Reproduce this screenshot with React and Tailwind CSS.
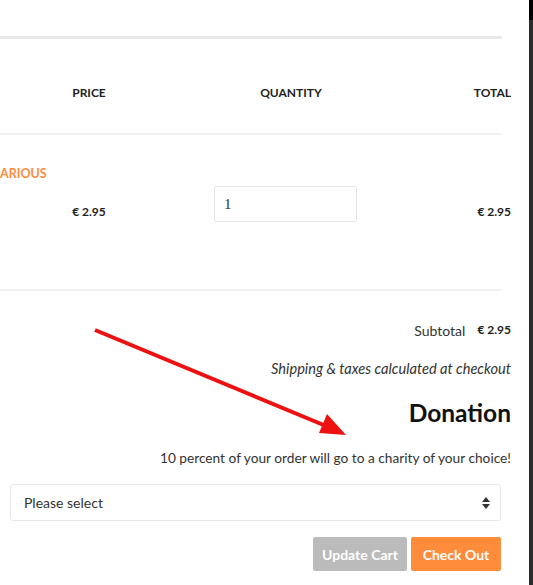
export default function App() {
  return (
    <div className="flex h-[585px] w-[533px] overflow-hidden bg-white font-['Lato',sans-serif] text-[#333]">
      <div className="relative w-[529px]">
        <div className="h-[36px]" />
        <div className="h-[3px] w-[502px] bg-[#e9e9e9]" />

        <div className="flex h-[94px] w-[511px] items-start pt-[46px] text-[12px] font-bold uppercase leading-[16px] text-[#222]">
          <div className="w-[44px]" />
          <div className="w-[90px] text-center">Price</div>
          <div className="w-[314px] text-center">Quantity</div>
          <div className="flex-1 text-right">Total</div>
        </div>
        <div className="h-[2px] w-[502px] bg-[#f1f1f1]" />

        <div className="flex h-[154px] w-[511px] items-start">
          <div className="w-[44px] pt-[31px]">
            <div className="whitespace-nowrap text-[12.5px] font-bold leading-[16px] text-[#ff8c3f]">ARIOUS</div>
          </div>
          <div className="w-[90px] pt-[70px] text-center text-[12px] font-bold leading-[14px] text-[#222]">€ 2.95</div>
          <div className="w-[314px] pt-[51px]">
            <input
              defaultValue="1"
              className="ml-[80px] h-[36px] w-[143px] rounded-[2px] border border-[#e6e6e6] px-[9px] font-['Liberation_Serif',serif] text-[15px] text-[#333] outline-none"
            />
          </div>
          <div className="flex-1 pt-[70px] text-right text-[12px] font-bold leading-[14px] text-[#222]">€ 2.95</div>
        </div>
        <div className="h-[2px] w-[502px] bg-[#f1f1f1]" />

        <div className="flex w-[511px] flex-col items-end">
          <div className="mt-[29px] flex h-[20px] items-center gap-[12px] text-[14px]">
            <span>Subtotal</span>
            <span className="text-[12px] font-bold text-[#222]">€ 2.95</span>
          </div>
          <div className="mt-[19px] h-[20px] text-[14.6px] italic leading-[20px]">Shipping &amp; taxes calculated at checkout</div>
          <div className="mt-[19px] h-[30px] text-[24.5px] font-bold leading-[30px] text-[#111]">Donation</div>
          <div className="mt-[20px] h-[20px] text-[13.7px] leading-[20px]">10 percent of your order will go to a charity of your choice!</div>
          <div className="mt-[16px] ml-[10px] flex h-[37px] w-[491px] items-center justify-between self-start rounded-[3px] border border-[#e8e8e8] pl-[13px] pr-[10px] text-[14px]">
            <span>Please select</span>
            <svg width="8" height="12" viewBox="0 0 8 12">
              <path d="M4 0 L8 5 L0 5 Z" fill="#333" />
              <path d="M0 7 L8 7 L4 12 Z" fill="#333" />
            </svg>
          </div>
          <div className="mt-[16px] mr-[10px] flex gap-[4px]">
            <button className="h-[34px] w-[94px] rounded-[2px] bg-[#bbbbbb] text-[14px] font-bold text-white">Update Cart</button>
            <button className="h-[34px] w-[90px] rounded-[2px] bg-[#ff8c3a] text-[14px] font-bold text-white">Check Out</button>
          </div>
        </div>

        <svg className="pointer-events-none absolute left-0 top-0" width="529" height="585">
          <line x1="95" y1="330" x2="326" y2="426" stroke="#ee1111" strokeWidth="4" />
          <polygon points="346,435 319,433 327,414" fill="#ee1111" />
        </svg>
      </div>
      <div className="flex w-[4px] flex-col bg-[#2b2b2b]">
        <div className="h-[20px] bg-black" />
      </div>
    </div>
  )
}
